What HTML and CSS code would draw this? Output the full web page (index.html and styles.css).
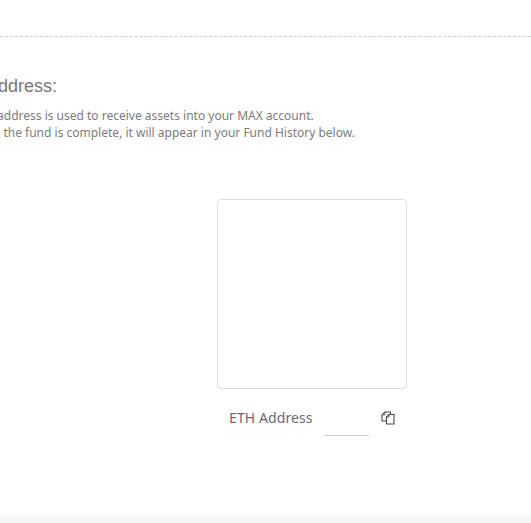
FILE: index.html
```html
<!DOCTYPE html>
<html>
    <head>
        <meta charset="utf-8">
        <title>ETH Deposit</title>
        <link rel="stylesheet" href="styles.css">
    </head>
    <body>
        <main class="panel">
            <hr class="divider">
            <div class="intro">
                <h2 class="intro-title">ETH Address:</h2>
                <p class="intro-text">This address is used to receive assets into your MAX account.<br>Once the fund is complete, it will appear in your Fund History below.</p>
            </div>
            <div class="deposit">
                <div class="qr-box"></div>
                <div class="address-row">
                    <span class="address-label">ETH Address</span>
                    <span class="address-value"></span>
                    <svg class="copy-icon" width="14" height="14" viewBox="0 0 14 14" fill="none" stroke="#45434c" stroke-width="1.1">
                        <path d="M9.500 3V1H4L1 4V10H5"/>
                        <path d="M4 1V4H1" stroke-width="0.7"/>
                        <path d="M5.500 13V6L8 3.500H13V13Z"/>
                        <path d="M8 3.500V6H5.500" stroke-width="0.7"/>
                    </svg>
                </div>
            </div>
        </main>
        <footer class="page-foot"></footer>
    </body>
</html>
```

FILE: styles.css
```css
html, body {
    margin: 0;
    height: 523px;
    overflow: hidden;
    background: #f7f7f7;
}

.panel {
    height: 515px;
    background: #fff;
    box-sizing: border-box;
    padding-top: 36px;
    overflow: hidden;
}

.divider {
    margin: 0;
    border: 0;
    border-top: 1px dashed #ccc;
}

.intro {
    margin: 39px 0 0 -29px;
    width: 600px;
}

.intro-title {
    margin: 0 0 0 -25px;
    font-family: "Liberation Sans", sans-serif;
    font-weight: 400;
    font-size: 18px;
    line-height: 21px;
    color: #777;
}

.intro-text {
    margin: 10px 0 0;
    font-family: "Noto Sans", sans-serif;
    font-size: 12px;
    line-height: 17px;
    color: #7d7b80;
}

.deposit {
    margin: 58px 0 0 217px;
    width: 190px;
}

.qr-box {
    box-sizing: border-box;
    width: 190px;
    height: 190px;
    border: 1px solid #ddd;
    border-radius: 4px;
}

.address-row {
    display: flex;
    align-items: flex-start;
    padding: 19px 0 0 12px;
}

.address-label {
    font-family: "Noto Sans", sans-serif;
    font-size: 14px;
    letter-spacing: 0.1px;
    line-height: 20px;
    color: #6c6a70;
    width: 95px;
}

.address-value {
    width: 45px;
    height: 27px;
    border-bottom: 1px solid #ccc;
}

.copy-icon {
    margin: 3px 0 0 12px;
}

.page-foot {
    height: 8px;
    background: #f7f7f7;
}
```
